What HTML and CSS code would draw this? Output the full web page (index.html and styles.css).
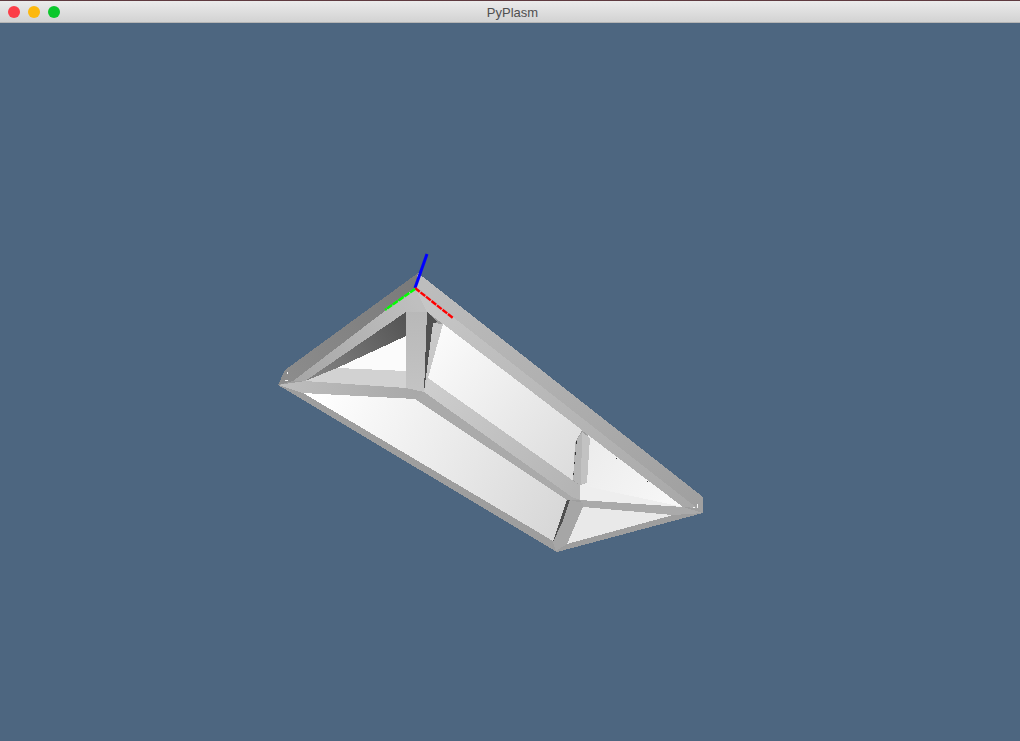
FILE: index.html
```html
<!DOCTYPE html>
<html lang="en">
<head>
    <meta charset="UTF-8">
    <title>PyPlasm</title>
    <link rel="stylesheet" href="styles.css">
</head>
<body>
    <div class="window">
        <div class="titlebar">
            <div class="lights">
                <span class="light light-close"></span>
                <span class="light light-min"></span>
                <span class="light light-max"></span>
            </div>
            <div class="title">PyPlasm</div>
        </div>
        <div class="viewport">
            <!-- viewBox starts at y=23 so points below are window coordinates -->
            <svg class="scene" viewBox="0 23 1020 718" width="1020" height="718">
                <defs>
                    <linearGradient id="floor" gradientUnits="userSpaceOnUse" x1="320" y1="390" x2="560" y2="540">
                        <stop offset="0" stop-color="#ffffff"/>
                        <stop offset="1" stop-color="#d6d6d6"/>
                    </linearGradient>
                    <linearGradient id="wall" gradientUnits="userSpaceOnUse" x1="430" y1="340" x2="580" y2="470">
                        <stop offset="0" stop-color="#fbfbfb"/>
                        <stop offset="1" stop-color="#dcdcdc"/>
                    </linearGradient>
                    <linearGradient id="farwall" gradientUnits="userSpaceOnUse" x1="590" y1="440" x2="680" y2="505">
                        <stop offset="0" stop-color="#ececec"/>
                        <stop offset="1" stop-color="#f8f8f8"/>
                    </linearGradient>
                    <linearGradient id="pit" gradientUnits="userSpaceOnUse" x1="320" y1="375" x2="406" y2="320">
                        <stop offset="0" stop-color="#808080"/>
                        <stop offset="1" stop-color="#555555"/>
                    </linearGradient>
                    <linearGradient id="beamOuter" gradientUnits="userSpaceOnUse" x1="430" y1="280" x2="700" y2="500">
                        <stop offset="0" stop-color="#bdbdbd"/>
                        <stop offset="1" stop-color="#a0a0a0"/>
                    </linearGradient>
                    <linearGradient id="beamInner" gradientUnits="userSpaceOnUse" x1="430" y1="300" x2="690" y2="505">
                        <stop offset="0" stop-color="#c6c6c6"/>
                        <stop offset="1" stop-color="#a8a8a8"/>
                    </linearGradient>
                    <linearGradient id="beamMid" gradientUnits="userSpaceOnUse" x1="425" y1="385" x2="575" y2="490">
                        <stop offset="0" stop-color="#cecece"/>
                        <stop offset="1" stop-color="#b4b4b4"/>
                    </linearGradient>
                    <linearGradient id="beamTop" gradientUnits="userSpaceOnUse" x1="300" y1="375" x2="415" y2="300">
                        <stop offset="0" stop-color="#a8a8a8"/>
                        <stop offset="1" stop-color="#bfbfbf"/>
                    </linearGradient>
                    <linearGradient id="beamDark" gradientUnits="userSpaceOnUse" x1="285" y1="375" x2="415" y2="280">
                        <stop offset="0" stop-color="#8c8c8c"/>
                        <stop offset="1" stop-color="#7a7a7a"/>
                    </linearGradient>
                    <linearGradient id="beamFront" gradientUnits="userSpaceOnUse" x1="285" y1="385" x2="415" y2="395">
                        <stop offset="0" stop-color="#bdbdbd"/>
                        <stop offset="1" stop-color="#a9a9a9"/>
                    </linearGradient>
                    <linearGradient id="post" gradientUnits="userSpaceOnUse" x1="416" y1="310" x2="416" y2="395">
                        <stop offset="0" stop-color="#b8b8b8"/>
                        <stop offset="1" stop-color="#c4c4c4"/>
                    </linearGradient>
                </defs>

                <g shape-rendering="crispEdges">
                    <!-- whole silhouette first so no background shows between faces -->
                    <polygon fill="#9e9e9e" points="418,273 703,497 703,513 557,552 278,385 285,370"/>

                    <!-- floor -->
                    <polygon fill="url(#floor)" points="303,393 415,399 567,500 553,541"/>

                    <!-- top right beam -->
                    <polygon fill="url(#beamOuter)" points="418,273 703,497 703,513 697,508 453,317 415,288"/>
                    <polygon fill="url(#beamInner)" points="415,288 453,317 697,508 683,507 588,435 443,324 427,312 406,312"/>

                    <!-- top left beam -->
                    <polygon fill="url(#beamDark)" points="418,273 285,370 278,385 293,381 415,288"/>
                    <polygon fill="url(#beamTop)" points="415,288 293,381 305,381 406,312 427,312"/>

                    <!-- opening on the left -->
                    <polygon fill="url(#pit)" points="406,312 406,336 337,368 305,381"/>
                    <polygon fill="#fbfbfb" points="406,336 406,371 337,368"/>
                    <polygon fill="#d2d2d2" points="337,368 406,371 406,388 305,381"/>
                    <polygon fill="url(#beamFront)" points="278,385 305,381 406,388 424,392 415,399 303,393"/>

                    <!-- big wall on the right -->
                    <polygon fill="url(#wall)" points="443,324 582,430 575,443 573,482 428,378"/>

                    <!-- middle beam -->
                    <polygon fill="url(#beamMid)" points="428,378 424,392 572,497 580,500 580,485 575,482"/>
                    <polygon fill="#aaaaaa" points="424,392 415,399 567,500 580,500 572,497"/>

                    <!-- front post -->
                    <polygon fill="url(#post)" points="406,312 427,312 424,392 406,388"/>
                    <polygon fill="#505050" points="427,312 438,322 433,323 424,392"/>
                    <polygon fill="#c8c8c8" points="433,323 443,324 428,378 424,392"/>

                    <!-- far end -->
                    <polygon fill="url(#farwall)" points="588,435 683,507 580,485"/>
                    <polygon fill="#eeeeee" points="580,485 683,507 580,500"/>
                    <polygon fill="#b6b6b6" points="582,432 590,438 587,483 580,485 573,480 575,443"/>
                    <polygon fill="#c2c2c2" points="582,432 590,438 587,483 581,484"/>
                    <polygon fill="#aaaaaa" points="580,500 683,507 703,513 673,515 583,507"/>
                    <polygon fill="#e9e9e9" points="583,507 673,515 567,544"/>
                    <polygon fill="#505050" points="567,500 570,500 562,523 553,542"/>
                    <polygon fill="#a6a6a6" points="570,500 583,503 583,507 567,544 556,551 553,542 562,523"/>

                    <!-- stray pixels along the seams -->
                    <rect class="speck-dark" x="576" y="441" width="1" height="3"/>
                    <rect class="speck-dark" x="575" y="452" width="1" height="3"/>
                    <rect class="speck-dark" x="574" y="462" width="1" height="2"/>
                    <rect class="speck-dark" x="573" y="473" width="1" height="2"/>
                    <rect class="speck-dark" x="616" y="458" width="1" height="1"/>
                    <rect class="speck-dark" x="647" y="481" width="1" height="1"/>
                    <rect class="speck-light" x="697" y="504" width="1" height="4"/>
                    <rect class="speck-light" x="693" y="507" width="2" height="1"/>
                    <rect class="speck-light" x="287" y="372" width="1" height="2"/>
                    <rect class="speck-light" x="285" y="380" width="3" height="1"/>
                </g>

                <!-- axes -->
                <line class="axis axis-z" x1="415" y1="288" x2="427" y2="254"/>
                <line class="axis axis-x" x1="415" y1="288" x2="453" y2="318"/>
                <line class="axis axis-y" x1="415" y1="289" x2="385" y2="310"/>
            </svg>
        </div>
    </div>
</body>
</html>
```

FILE: styles.css
```css
html, body {
    margin: 0;
    padding: 0;
    height: 100%;
    overflow: hidden;
}

.window {
    display: flex;
    flex-direction: column;
    width: 1020px;
    height: 741px;
    background-color: #4d6680;
}

.titlebar {
    display: grid;
    grid-template-columns: 1fr auto 1fr;
    align-items: center;
    flex: 0 0 23px;
    box-sizing: border-box;
    padding-top: 1px;
    border-top: 1px solid #5f3a3f;
    border-bottom: 1px solid #b5b5b5;
    background: linear-gradient(#ebebeb, #d2d2d2);
    font-family: "Liberation Sans", Arial, sans-serif;
}

.lights {
    display: flex;
    gap: 8px;
    padding-left: 8px;
}

.light {
    width: 12px;
    height: 12px;
    border-radius: 50%;
}

.light-close {
    background-color: #fc3d48;
}

.light-min {
    background-color: #fdb80d;
}

.light-max {
    background-color: #0bc72c;
}

.title {
    padding-left: 5px;
    font-size: 13px;
    color: #4f4f4f;
}

.viewport {
    flex: 1;
}

.scene {
    display: block;
}

.axis {
    stroke-width: 2.4;
}

.axis-z {
    stroke: #0000ff;
    stroke-width: 3;
}

.axis-x {
    stroke: #ff0000;
    stroke-dasharray: 6 1;
}

.axis-y {
    stroke: #00ff00;
    stroke-dasharray: 6 1;
}

.speck-dark {
    fill: #333333;
}

.speck-light {
    fill: #f4f4f4;
}
```
